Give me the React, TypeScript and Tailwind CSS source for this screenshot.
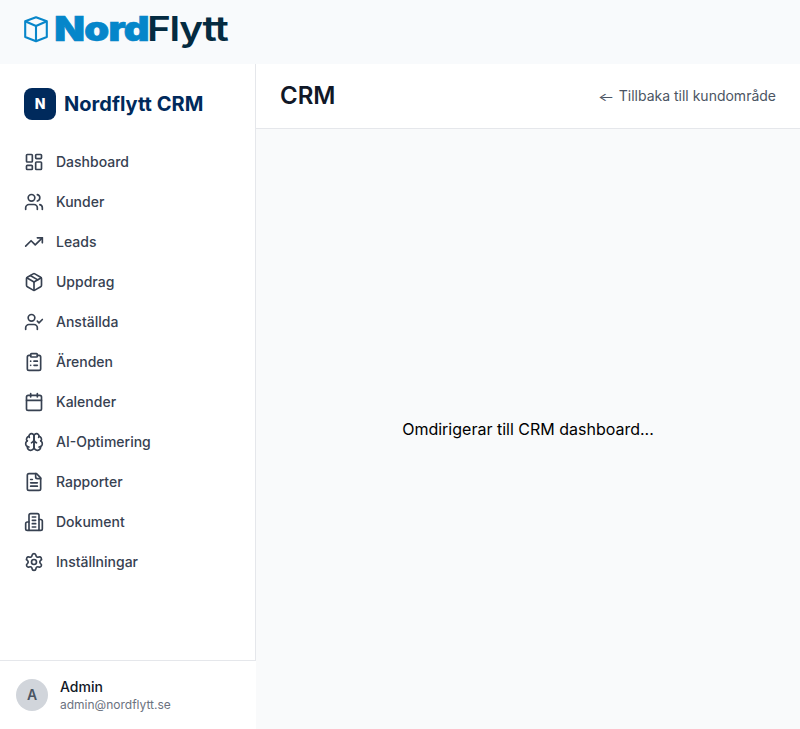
import React from "react";
import {
  LayoutDashboard, Users, TrendingUp, Package, UserCheck, ClipboardList,
  Calendar, Settings,
} from "lucide-react";

type IconProps = { size?: number; strokeWidth?: number };

const outline = (paths: string[]) =>
  function OutlineIcon({ size = 20, strokeWidth = 2 }: IconProps) {
    return (
      <svg width={size} height={size} viewBox="0 0 24 24" fill="none" stroke="currentColor" strokeWidth={strokeWidth} strokeLinecap="round" strokeLinejoin="round">
        {paths.map((d) => <path key={d} d={d} />)}
      </svg>
    );
  };

const Brain = outline([
  "M12 5a3 3 0 1 0-5.997.125 4 4 0 0 0-2.526 5.77 4 4 0 0 0 .556 6.588A4 4 0 1 0 12 18Z",
  "M12 5a3 3 0 1 1 5.997.125 4 4 0 0 1 2.526 5.77 4 4 0 0 1-.556 6.588A4 4 0 1 1 12 18Z",
  "M15 13a4.5 4.5 0 0 1-3-4 4.5 4.5 0 0 1-3 4",
  "M17.599 6.5a3 3 0 0 0 .399-1.375",
  "M6.003 5.125A3 3 0 0 0 6.401 6.5",
  "M3.477 10.896a4 4 0 0 1 .585-.396",
  "M19.938 10.5a4 4 0 0 1 .585.396",
  "M6 18a4 4 0 0 1-1.967-.516",
  "M19.967 17.484A4 4 0 0 1 18 18",
]);

const FileText = outline([
  "M15 2H6a2 2 0 0 0-2 2v16a2 2 0 0 0 2 2h12a2 2 0 0 0 2-2V7Z",
  "M14 2v4a2 2 0 0 0 2 2h4",
  "M10 9H8",
  "M16 13H8",
  "M16 17H8",
]);

const Building = outline([
  "M6 22V4a2 2 0 0 1 2-2h8a2 2 0 0 1 2 2v18Z",
  "M6 12H4a2 2 0 0 0-2 2v6a2 2 0 0 0 2 2h2",
  "M18 9h2a2 2 0 0 1 2 2v9a2 2 0 0 1-2 2h-2",
  "M10 6h4",
  "M10 10h4",
  "M10 14h4",
  "M10 18h4",
]);

const items = [
  { label: "Dashboard", Icon: LayoutDashboard },
  { label: "Kunder", Icon: Users },
  { label: "Leads", Icon: TrendingUp },
  { label: "Uppdrag", Icon: Package },
  { label: "Anställda", Icon: UserCheck },
  { label: "Ärenden", Icon: ClipboardList },
  { label: "Kalender", Icon: Calendar },
  { label: "AI-Optimering", Icon: Brain },
  { label: "Rapporter", Icon: FileText },
  { label: "Dokument", Icon: Building },
  { label: "Inställningar", Icon: Settings },
];

function Logo() {
  return (
    <svg width="216" height="64" viewBox="22 0 216 64" fontFamily="Inter, sans-serif" fontSize="34" aria-label="NordFlytt">
      <g fill="none" stroke="#0886ca" strokeWidth="2.1" strokeLinejoin="round">
        <path d="M36 17.2 46.8 21.3V37L36 41.3 25.2 37V21.3Z" />
        <path d="M25.2 21.3 36 26 46.8 21.3M36 26V41" />
      </g>
      <text x="54.3" y="41.2" fontWeight="900" fill="#0586ca" stroke="#0586ca" strokeWidth="0.7" textLength="94.6" lengthAdjust="spacingAndGlyphs" letterSpacing="-0.6">Nord</text>
      <text x="147" y="41.2" fontWeight="600" fill="#042b41" textLength="80.5" lengthAdjust="spacingAndGlyphs" letterSpacing="-1">Flytt</text>
    </svg>
  );
}

export default function App() {
  return (
    <div className="flex h-[729px] flex-col bg-[#f9fafb] font-['Inter',sans-serif] text-black">
      <header className="flex h-16 shrink-0 items-start bg-[#f8fafc] pl-[22px]">
        <Logo />
      </header>
      <div className="flex min-h-0 flex-1">
        <aside className="flex w-64 shrink-0 flex-col bg-white">
          <div className="flex-1 border-r border-[#e5e7eb]">
            <div className="flex items-center gap-2 px-6 pt-6 pb-[22px]">
              <div className="flex size-8 items-center justify-center rounded-lg bg-[#002a5c] text-sm font-extrabold text-white">N</div>
              <span className="text-xl font-bold tracking-[0.03px] text-[#002a5c]">Nordflytt CRM</span>
            </div>
            <nav className="flex flex-col px-6">
              {items.map(({ label, Icon }) => (
                <a key={label} className="flex h-10 items-center gap-3 text-sm font-medium text-[#374151]">
                  <Icon size={20} strokeWidth={2} />
                  <span>{label}</span>
                </a>
              ))}
            </nav>
          </div>
          <div className="flex h-[69px] items-center gap-3 border-t border-[#e5e7eb] px-4">
            <div className="flex size-8 items-center justify-center rounded-full bg-[#d1d5db] text-sm font-semibold text-[#4b5563]">A</div>
            <div>
              <p className="text-sm leading-5 font-medium text-[#111827]">Admin</p>
              <p className="text-xs leading-4 text-[#6b7280]">admin@nordflytt.se</p>
            </div>
          </div>
        </aside>
        <main className="flex flex-1 flex-col">
          <div className="flex h-[65px] items-center justify-between border-b border-[#e5e7eb] bg-white px-6">
            <h1 className="text-2xl font-semibold text-[#111827]">CRM</h1>
            <a className="text-sm text-[#4b5563]"><span className="inline-block origin-right translate-y-px scale-x-[1.25] scale-y-[0.85]">←</span> Tillbaka till kundområde</a>
          </div>
          <div className="flex flex-1 items-center justify-center">
            <p>Omdirigerar till CRM dashboard...</p>
          </div>
        </main>
      </div>
    </div>
  );
}
